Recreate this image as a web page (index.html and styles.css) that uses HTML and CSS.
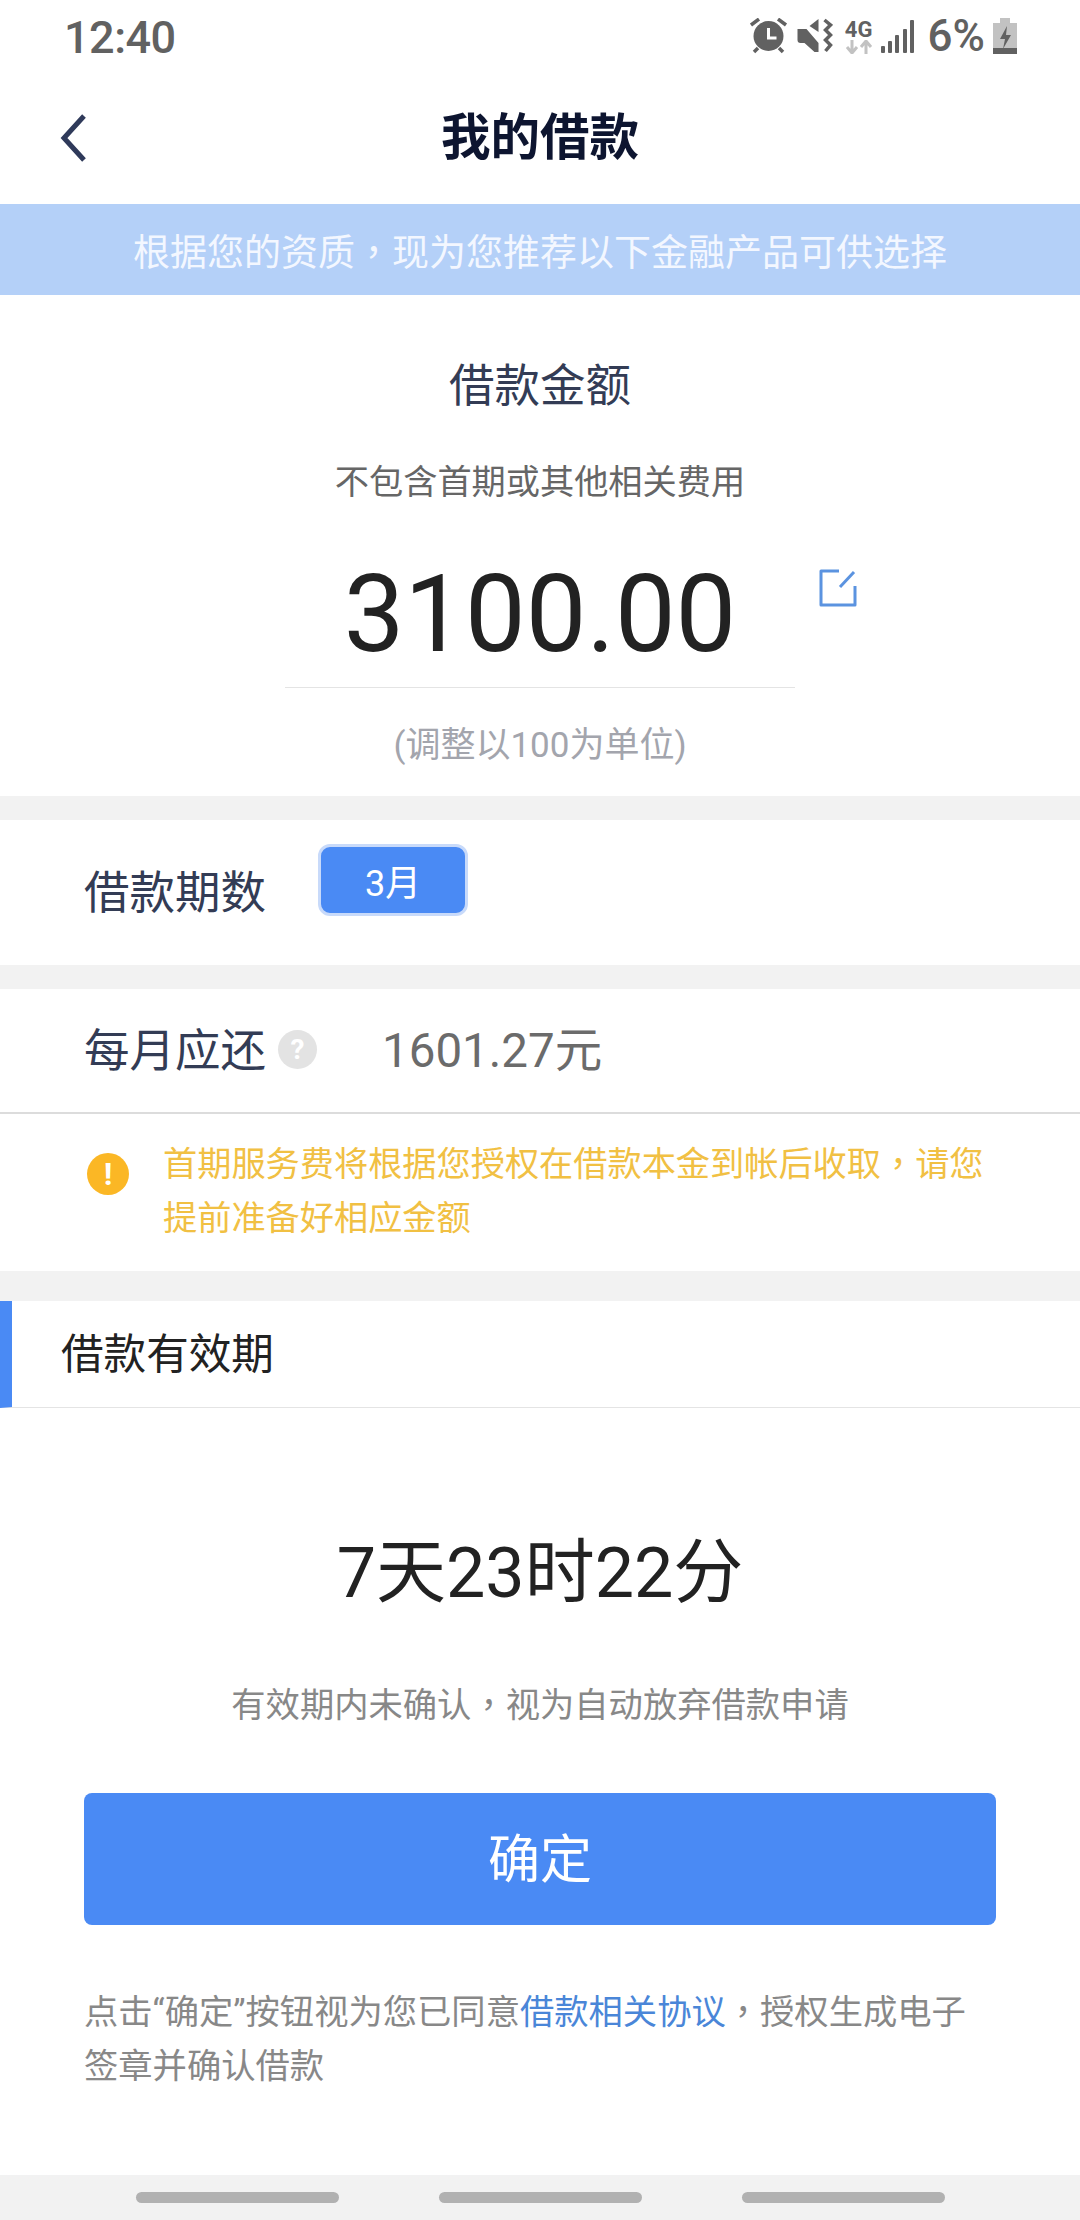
FILE: index.html
```html
<!DOCTYPE html>
<html lang="zh-CN">
<head>
  <meta charset="UTF-8">
  <meta name="viewport" content="width=device-width, initial-scale=1.0">
  <title>我的借款</title>
  <link rel="stylesheet" href="styles.css">
</head>
<body>

  <div class="status-bar">
    <span class="clock">12:40</span>
    <div class="status-icons">
      <!-- alarm -->
      <svg class="icon-alarm" width="38" height="36" viewBox="0 0 38 36">
        <circle cx="18.5" cy="18" r="15" fill="#616161"/>
        <path d="M18.5 10v10h8" fill="none" stroke="#fff" stroke-width="3"/>
        <path d="M1 7l8-6M36 7l-8-6M4 34l4-4M33 34l-4-4" fill="none" stroke="#616161" stroke-width="3.5"/>
      </svg>
      <!-- vibrate / mute -->
      <svg class="icon-mute" width="37" height="36" viewBox="0 0 36 36">
        <path d="M1 11h9l12 14v9h-4L8 25H4q-3 0-3-3z" fill="#616161"/>
        <path d="M13 8l9-7v13z" fill="#616161"/>
        <path d="M28 2l6 5-5 5 5 5-5 5 5 5-5 6" fill="none" stroke="#616161" stroke-width="3.5"/>
      </svg>
      <div class="net">
        <span class="net-label">4G</span>
        <svg width="28" height="14" viewBox="0 0 28 14">
          <path d="M7 0v11M2 7l5 6 5-6" fill="none" stroke="#c2c2c2" stroke-width="3"/>
          <path d="M21 14V3M16 7l5-6 5 6" fill="none" stroke="#c2c2c2" stroke-width="3"/>
        </svg>
      </div>
      <svg class="icon-signal" width="34" height="34" viewBox="0 0 34 34">
        <rect x="0" y="27" width="4" height="7" rx="1" fill="#616161"/>
        <rect x="7" y="22" width="4" height="12" rx="1" fill="#616161"/>
        <rect x="14" y="16" width="4" height="18" rx="1" fill="#616161"/>
        <rect x="22" y="10" width="4" height="24" rx="1" fill="#616161"/>
        <rect x="29" y="1" width="4" height="33" rx="1" fill="#616161"/>
      </svg>
      <span class="battery-text">6%</span>
      <svg class="icon-battery" width="24" height="36" viewBox="0 0 24 36">
        <path d="M7 0h10v5h7v31H0V5h7z" fill="#c2c2c2"/>
        <rect y="30" width="24" height="6" fill="#616161"/>
        <path d="M14 8l-7 13h5l-2 10 8-14h-5z" fill="#616161"/>
      </svg>
    </div>
  </div>

  <header class="nav-bar">
    <svg class="back" width="26" height="48" viewBox="0 0 26 48">
      <path d="M24 2L4 24l20 22" fill="none" stroke="#2f3a5a" stroke-width="5"/>
    </svg>
    <h1>我的借款</h1>
  </header>

  <div class="banner"><span>根据您的资质<span class="mid-comma" lang="zh-TW">，</span>现为您推荐以下金融产品可供选择</span></div>

  <section class="amount-card">
    <h2>借款金额</h2>
    <p class="amount-note">不包含首期或其他相关费用</p>
    <div class="amount-row">
      <span class="amount">3100.00</span>
      <svg class="edit" width="38" height="38" viewBox="0 0 38 38">
        <path d="M20 2H2v34h34V17" fill="none" stroke="#5b93e0" stroke-width="3" stroke-linejoin="round"/>
        <path d="M35 3L21 18" fill="none" stroke="#5b93e0" stroke-width="3"/>
      </svg>
    </div>
    <p class="amount-hint">(调整以100为单位)</p>
  </section>

  <section class="row term-row">
    <span class="row-label">借款期数</span>
    <span class="term-chip">3月</span>
  </section>

  <section class="row repay-row">
    <span class="row-label">每月应还</span>
    <span class="help">?</span>
    <span class="repay-value">1601.27元</span>
  </section>

  <section class="warning">
    <span class="warning-icon">!</span>
    <p>首期服务费将根据您授权在借款本金到帐后收取<span class="mid-comma" lang="zh-TW">，</span>请您<br>提前准备好相应金额</p>
  </section>

  <section class="validity">
    <h3 class="validity-title">借款有效期</h3>
    <div class="countdown">7天23时22分</div>
    <p class="validity-note">有效期内未确认<span class="mid-comma" lang="zh-TW">，</span>视为自动放弃借款申请</p>
    <button class="confirm" type="button">确定</button>
    <p class="agreement">点击“确定”按钮视为您已同意<a href="#">借款相关协议</a><span class="mid-comma" lang="zh-TW">，</span>授权生成电子<br>签章并确认借款</p>
  </section>

  <div class="home-bar">
    <span></span>
    <span></span>
    <span></span>
  </div>

</body>
</html>
```

FILE: styles.css
```css
* {
  box-sizing: border-box;
}
html, body {
  margin: 0;
  padding: 0;
}
body {
  width: 1080px;
  height: 2220px;
  display: flex;
  flex-direction: column;
  background: #fff;
  font-family: Roboto, "Noto Sans CJK SC", sans-serif;
  overflow: hidden;
}
h1, h2, h3, p {
  margin: 0;
  font-weight: normal;
}
/* the TC cut sets the comma in the middle of its box, as the reference does */
.mid-comma {
  font-family: "Noto Sans CJK TC", sans-serif;
}

.status-bar {
  height: 72px;
  padding: 0 63px 0 64px;
  display: flex;
  align-items: center;
  justify-content: space-between;
  color: #616161;
}
.clock {
  padding-top: 2px;
  font-size: 45px;
  letter-spacing: -0.5px;
  font-weight: 500;
}
.status-icons {
  display: flex;
  align-items: center;
}
.icon-mute {
  margin-left: 8px;
}
.net {
  margin-left: 11px;
  width: 30px;
  display: flex;
  flex-direction: column;
  align-items: center;
}
.net-label {
  font-size: 22px;
  line-height: 21px;
  font-weight: 700;
}
.icon-signal {
  margin-left: 7px;
}
.battery-text {
  margin-left: 13px;
  font-size: 44px;
  font-weight: 500;
}
.icon-battery {
  margin-left: 8px;
}

.nav-bar {
  height: 132px;
  padding-bottom: 10px;
  display: flex;
  align-items: center;
  justify-content: center;
  position: relative;
}
.nav-bar h1 {
  font-size: 49.5px;
  font-weight: 700;
  color: #0d1530;
}
.back {
  position: absolute;
  left: 60px;
  top: 42px;
}

.banner {
  height: 91px;
  background: #b4d0f8;
  color: #f3f7ff;
  font-size: 37px;
  display: flex;
  align-items: center;
  justify-content: center;
}

.amount-card {
  height: 525px;
  border-bottom: 24px solid #f2f2f2;
  padding-top: 62px;
  display: flex;
  flex-direction: column;
  align-items: center;
}
.amount-card h2 {
  font-size: 45.5px;
  line-height: 60px;
  color: #333c55;
}
.amount-note {
  margin-top: 42px;
  font-size: 34.2px;
  line-height: 46px;
  color: #666;
}
.amount-row {
  margin-top: 50px;
  width: 510px;
  height: 133px;
  border-bottom: 1px solid #e4e4e4;
  position: relative;
  text-align: center;
}
.amount {
  font-size: 108px;
  line-height: 118px;
  color: #222;
}
.edit {
  position: absolute;
  left: 534px;
  top: 14px;
}
.amount-hint {
  margin-top: 35px;
  font-size: 35px;
  line-height: 46px;
  color: #a3a5ad;
}

.row {
  display: flex;
  align-items: center;
  padding-left: 84px;
}
.row-label {
  font-size: 45.5px;
  color: #333c55;
}
.term-row {
  height: 169px;
  border-bottom: 24px solid #f2f2f2;
  padding-bottom: 8px;
}
.term-chip {
  margin: 0 0 18px 52px;
  width: 150px;
  height: 72px;
  background: #4a8af4;
  border: 3px solid #c8dafa;
  border-radius: 12px;
  color: #fff;
  font-size: 36px;
  display: flex;
  align-items: center;
  justify-content: center;
}
.repay-row {
  height: 125px;
  border-bottom: 2px solid #dcdcdc;
  padding-bottom: 8px;
}
.help {
  margin: 6px 0 0 12px;
  width: 39px;
  height: 39px;
  border-radius: 50%;
  background: #e3e3e3;
  color: #fff;
  font-size: 28px;
  font-weight: 700;
  display: flex;
  align-items: center;
  justify-content: center;
}
.repay-value {
  margin-left: 65px;
  font-size: 47.5px;
  color: #6b6b6b;
}

.warning {
  height: 187px;
  border-bottom: 30px solid #f2f2f2;
  padding: 21px 84px 0 87px;
  display: flex;
  color: #f1c043;
}
.warning-icon {
  flex: none;
  margin-top: 18px;
  width: 42px;
  height: 42px;
  border-radius: 50%;
  background: #fbb725;
  color: #fff;
  font-size: 32px;
  font-weight: 700;
  display: flex;
  align-items: center;
  justify-content: center;
}
.warning p {
  margin-left: 34px;
  font-size: 34.2px;
  line-height: 53.5px;
}

.validity {
  flex: 1;
  display: flex;
  flex-direction: column;
}
.validity-title {
  height: 107px;
  border-left: 12px solid #4a8af4;
  border-bottom: 1px solid #e4e4e4;
  padding-left: 49px;
  font-size: 42.6px;
  line-height: 106px;
  color: #222;
}
.countdown {
  margin-top: 120px;
  font-size: 70px;
  line-height: 90px;
  text-align: center;
  color: #222;
}
.validity-note {
  margin-top: 60px;
  font-size: 34.3px;
  line-height: 48px;
  text-align: center;
  color: #888;
}
.confirm {
  margin: 64px 84px 0;
  height: 132px;
  padding: 0 0 8px;
  border: none;
  border-radius: 8px;
  background: #4a8af4;
  color: #fff;
  font-family: inherit;
  font-size: 52px;
}
.agreement {
  margin: 58px 84px 0;
  font-size: 34.3px;
  line-height: 53.5px;
  color: #888;
}
.agreement a {
  color: #4a86d8;
  text-decoration: none;
}

.home-bar {
  height: 45px;
  background: #f2f2f2;
  display: flex;
  align-items: center;
  justify-content: center;
  gap: 100px;
}
.home-bar span {
  width: 203px;
  height: 11px;
  border-radius: 6px;
  background: #b1b1b1;
}
```
